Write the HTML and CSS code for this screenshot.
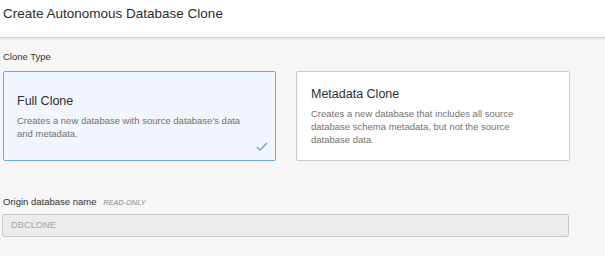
FILE: index.html
```html
<!DOCTYPE html>
<html lang="en">
<head>
<meta charset="utf-8">
<title>Create Autonomous Database Clone</title>
<link rel="stylesheet" href="styles.css">
</head>
<body>
<header class="header">
  <h1 class="title">Create Autonomous Database Clone</h1>
</header>
<main class="content">
  <div class="label">Clone Type</div>
  <div class="cards">
    <div class="card card-selected">
      <div class="card-title">Full Clone</div>
      <div class="card-desc">Creates a new database with source database's data and metadata.</div>
      <svg class="check" width="12" height="9" viewBox="0 0 12 9"><polyline points="1,5 4,8 11,1" fill="none" stroke="#5b9ee6" stroke-width="1.3"/></svg>
    </div>
    <div class="card">
      <div class="card-title">Metadata Clone</div>
      <div class="card-desc">Creates a new database that includes all source database schema metadata, but not the source database data.</div>
    </div>
  </div>
  <div class="label label-origin">Origin database name <span class="readonly">READ-ONLY</span></div>
  <div class="input">DBCLONE</div>
</main>
</body>
</html>
```
FILE: styles.css
```css
* { box-sizing: border-box; }
html, body { margin: 0; padding: 0; }
body {
  background: #f6f6f6;
  font-family: "Liberation Sans", Arial, sans-serif;
  color: #333;
  width: 605px;
  height: 256px;
  overflow: hidden;
}
.header {
  height: 38px;
  background: #fff;
  border-bottom: 1px solid #d6d6d6;
  box-shadow: 0 1px 3px rgba(0,0,0,0.10);
  padding: 5px 0 0 3px;
}
.title {
  margin: 0;
  font-size: 13.5px;
  font-weight: normal;
  line-height: 18px;
  color: #2c2c2c;
}
.content {
  padding: 13px 0 0 3px;
  width: 570px;
}
.label {
  font-size: 9.5px;
  line-height: 12px;
  color: #333;
}
.cards {
  margin-top: 8px;
  display: grid;
  grid-template-columns: 273px 274px;
  column-gap: 20px;
}
.card {
  position: relative;
  height: 90px;
  background: #fff;
  border: 1px solid #c9c9ce;
  border-radius: 2px;
  padding: 0 20px 0 14px;
  display: flex;
  flex-direction: column;
  justify-content: center;
}
.card-selected {
  background: #f1f6fc;
  border-color: #6aa8ee;
  padding-left: 13px;
}
.card-title {
  font-size: 12.5px;
  line-height: 16px;
  color: #2e2e2e;
  margin-bottom: 5px;
}
.card-desc {
  font-size: 9.5px;
  line-height: 13px;
  color: #717171;
}
.check {
  position: absolute;
  right: 7px;
  bottom: 9px;
}
.label-origin {
  margin-top: 35px;
}
.readonly {
  font-size: 7.4px;
  font-style: italic;
  color: #8a8a8a;
  margin-left: 4px;
}
.input {
  margin-top: 5px;
  margin-left: -1px;
  width: 567px;
  height: 23px;
  background: #ececec;
  border: 1px solid #c9c9cc;
  border-radius: 2px;
  padding-left: 8px;
  font-size: 9.3px;
  line-height: 21px;
  color: #a3a3a3;
}
```
